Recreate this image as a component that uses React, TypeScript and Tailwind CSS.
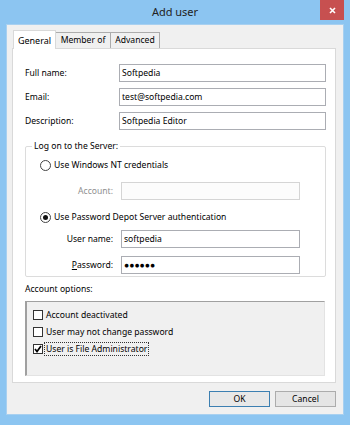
import React from "react";

const font = { fontFamily: '"Noto Sans", "Segoe UI", Arial, sans-serif' };

function Field({ label, value, disabled, underline }: { label: string; value?: string; disabled?: boolean; underline?: boolean }) {
  return (
    <div className="flex items-center h-[18px]">
      <div className={"w-[81px] text-right pr-[8px] " + (disabled ? "text-[#8f8f8f]" : "text-[#000]")}>
        {underline ? (
          <>
            <span className="underline">P</span>assword:
          </>
        ) : (
          label
        )}
      </div>
      <div className={"w-[179px] h-[18px] border flex items-center pl-[2px] " + (disabled ? "border-[#d5d5d5] bg-[#fcfcfc]" : "border-[#abadb3] bg-white")}>
        {value}
      </div>
    </div>
  );
}

function Radio({ checked, label }: { checked?: boolean; label: string }) {
  return (
    <div className="flex items-center h-[16px]">
      <div className="w-[11px] h-[11px] rounded-full border border-[#444] bg-white flex items-center justify-center mr-[3px]">
        {checked && <div className="w-[5px] h-[5px] rounded-full bg-[#111]" />}
      </div>
      <span>{label}</span>
    </div>
  );
}

function Check({ checked, label, focus }: { checked?: boolean; label: string; focus?: boolean }) {
  return (
    <div className="flex items-center h-[16px]">
      <div className="w-[10px] h-[10px] border border-[#333] bg-white flex items-center justify-center mr-[2px]">
        {checked && (
          <svg width="8" height="8" viewBox="0 0 8 8">
            <path d="M1 4 L3 6.5 L7 1" stroke="#000" strokeWidth="1.7" fill="none" />
          </svg>
        )}
      </div>
      <span className={focus ? "outline outline-1 outline-dotted outline-[#333] px-[1px] leading-[12px]" : "px-[1px]"}>{label}</span>
    </div>
  );
}

export default function App() {
  return (
    <div className="w-[350px] h-[425px] bg-[#8cc5f1] flex flex-col text-[8.6px] text-black" style={font}>
      <div className="h-[24px] flex items-start relative">
        <div className="flex-1 text-center text-[11px] text-[#222] pt-[4px]">Add user</div>
        <div className="absolute right-[6px] top-0 w-[24px] h-[20px] bg-[#c75050] flex items-center justify-center">
          <svg width="7" height="7" viewBox="0 0 7 7">
            <path d="M1 1 L6 6 M6 1 L1 6" stroke="#fff" strokeWidth="1.6" />
          </svg>
        </div>
      </div>
      <div className="mx-[6px] mb-[10px] flex-1 bg-[#f0f0f0] border border-[#a8d0f0] flex flex-col px-[5px] pt-[5px]">
        {/* Tabs */}
        <div className="flex items-end h-[18px] pl-[1px]">
          <div className="w-[43px] h-[19px] bg-white border border-b-0 border-[#d9d9d9] -mb-[1px] relative z-10 flex justify-center pt-[3px] text-[9px]">General</div>
          <div className="w-[55px] h-[16px] bg-[#f0f0f0] border border-b-0 border-l-0 border-[#acacac] flex items-center justify-center">Member of</div>
          <div className="w-[49px] h-[16px] bg-[#f0f0f0] border border-b-0 border-l-0 border-[#acacac] flex items-center justify-center">Advanced</div>
        </div>
        <div className="w-[324px] h-[335px] bg-white border border-[#d9d9d9] pl-[12px] pt-[15px] flex flex-col">
          <div className="flex flex-col gap-[6px] w-[301px]">
            {[
              ["Full name:", "Softpedia"],
              ["Email:", "test@softpedia.com"],
              ["Description:", "Softpedia Editor"],
            ].map(([l, v]) => (
              <div key={l} className="flex items-center h-[18px]">
                <div className="w-[94px]">{l}</div>
                <div className="flex-1 h-[18px] border border-[#abadb3] flex items-center pl-[2px]">{v}</div>
              </div>
            ))}
          </div>
          {/* Group box */}
          <div className="mt-[16px] w-[301px] h-[131px] border border-[#dcdcdc] rounded-[2px] relative pl-[14px] pt-[10px]">
            <div className="absolute -top-[8px] left-[6px] bg-white px-[2px] leading-[14px]">Log on to the Server:</div>
            <Radio label="Use Windows NT credentials" />
            <div className="mt-[9px]">
              <Field label="Account:" disabled />
            </div>
            <div className="mt-[9px]">
              <Radio checked label="Use Password Depot Server authentication" />
            </div>
            <div className="mt-[5px]">
              <Field label="User name:" value="softpedia" />
            </div>
            <div className="mt-[8px]">
              <Field label="Password:" underline value="●●●●●●" />
            </div>
          </div>
          <div className="mt-[3px] h-[18px] flex items-center">Account options:</div>
          <div className="mt-[3px] w-[300px] h-[75px] bg-[#f0f0f0] border-l-2 border-t border-[#a0a0a0] border-r border-b border-r-[#e3e3e3] border-b-[#e3e3e3] pl-[6px] pt-[5px] flex flex-col gap-[1px]">
            <Check label="Account deactivated" />
            <Check label="User may not change password" />
            <Check checked focus label="User is File Administrator" />
          </div>
        </div>
        <div className="flex justify-end gap-[5px] mt-[8px] pr-[2px]">
          <div className="w-[61px] h-[16px] border border-[#3c7fb1] bg-[#e8e8e8] flex items-center justify-center">OK</div>
          <div className="w-[61px] h-[16px] border border-[#acacac] bg-[#e5e5e5] flex items-center justify-center">Cancel</div>
        </div>
      </div>
    </div>
  );
}
